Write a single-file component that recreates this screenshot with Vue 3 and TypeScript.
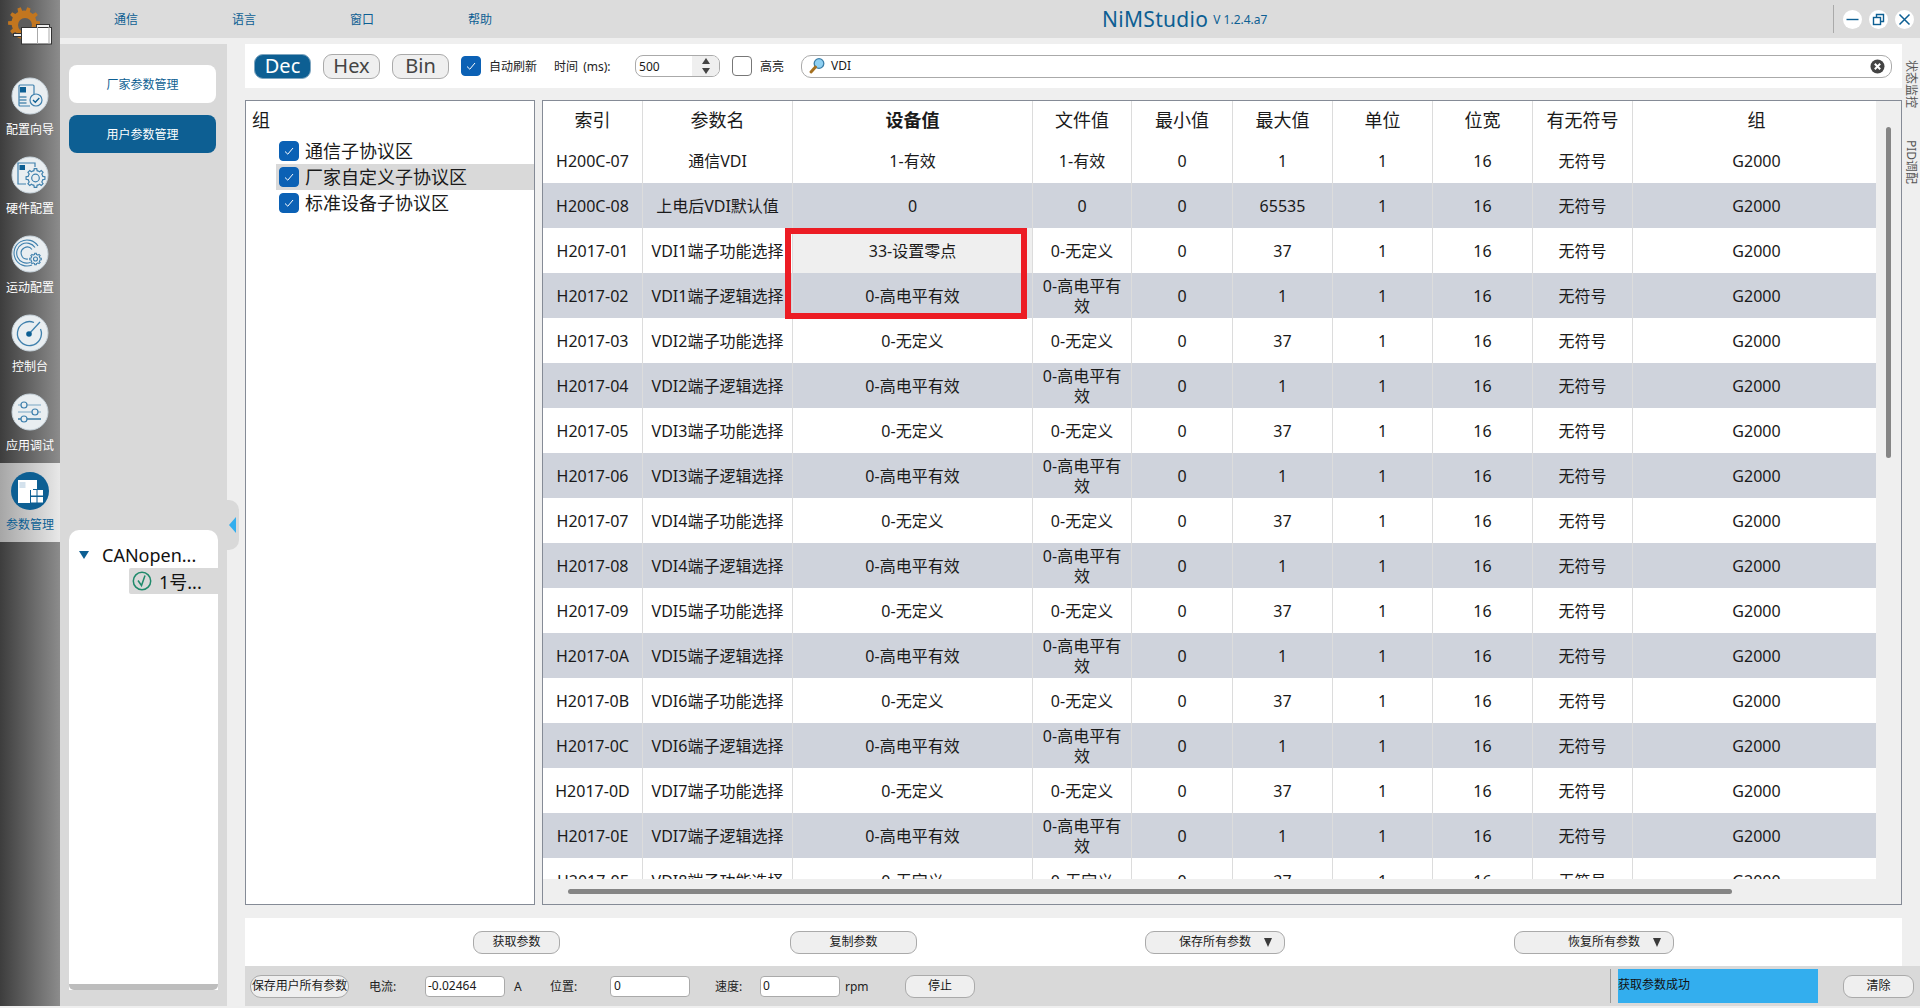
<script setup lang="ts">
function gear(cx: number, cy: number, ro: number, ri: number, teeth: number): string {
  const pts: string[] = []
  const step = (Math.PI * 2) / teeth
  for (let i = 0; i < teeth; i++) {
    const a = i * step
    const list: [number, number][] = [
      [ri, a - step * 0.5],
      [ri, a - step * 0.27],
      [ro, a - step * 0.17],
      [ro, a + step * 0.17],
      [ri, a + step * 0.27],
    ]
    for (const [r, t] of list) {
      pts.push(`${(cx + r * Math.cos(t)).toFixed(2)} ${(cy + r * Math.sin(t)).toFixed(2)}`)
    }
  }
  return 'M' + pts.join('L') + 'Z'
}

const logoGear = gear(24, 23, 16, 12.5, 10)
const icon2Gear = gear(24.5, 22, 9.5, 7.5, 8)
const icon3Gear = gear(24.5, 24, 5.8, 4.5, 8)

const menus = [
  { key: 'm1', name: '通信' },
  { key: 'm2', name: '语言' },
  { key: 'm3', name: '窗口' },
  { key: 'm4', name: '帮助' },
]
const navs = [
  { key: 'wizard', name: '配置向导' },
  { key: 'hardware', name: '硬件配置' },
  { key: 'motion', name: '运动配置' },
  { key: 'console', name: '控制台' },
  { key: 'tuning', name: '应用调试' },
  { key: 'params', name: '参数管理' },
]
const groups = [
  { name: '通信子协议区', active: false },
  { name: '厂家自定义子协议区', active: true },
  { name: '标准设备子协议区', active: false },
]
const heads = ['索引', '参数名', '设备值', '文件值', '最小值', '最大值', '单位', '位宽', '有无符号', '组']

type Row = { id: string; name: string; dev: string; file: string; min: string; max: string }
const rows: Row[] = [
  { id: 'H200C-07', name: '通信VDI', dev: '1-有效', file: '1-有效', min: '0', max: '1' },
  { id: 'H200C-08', name: '上电后VDI默认值', dev: '0', file: '0', min: '0', max: '65535' },
]
const suffix = ['01', '02', '03', '04', '05', '06', '07', '08', '09', '0A', '0B', '0C', '0D', '0E', '0F']
suffix.forEach((s, i) => {
  const n = Math.floor(i / 2) + 1
  const isFunc = i % 2 === 0
  rows.push({
    id: `H2017-${s}`,
    name: `VDI${n}端子${isFunc ? '功能' : '逻辑'}选择`,
    dev: i === 0 ? '33-设置零点' : isFunc ? '0-无定义' : '0-高电平有效',
    file: isFunc ? '0-无定义' : '0-高电平有效',
    min: '0',
    max: isFunc ? '37' : '1',
  })
})
</script>

<template>
  <div class="app">
    <aside class="rail">
      <div class="logo">
        <svg width="60" height="50" viewBox="0 0 60 50">
          <path :d="logoGear" fill="#c2761f" />
          <circle cx="25" cy="25" r="7" fill="#5c5c5c" />
          <rect x="13.500" y="33.500" width="9" height="3" fill="#eee" stroke="#333" />
          <rect x="36.500" y="24.500" width="13" height="3" fill="#eee" stroke="#333" />
          <rect x="21.500" y="27.500" width="30" height="16.500" fill="#fff" stroke="#333" />
          <path d="M37.500 27v17M49 27v17" stroke="#aaa" />
        </svg>
      </div>
      <div v-for="n in navs" :key="n.key" class="nav" :class="{ on: n.key === 'params' }">
        <svg class="nav-ic" width="38" height="38" viewBox="0 0 38 38">
          <template v-if="n.key === 'params'">
            <circle cx="19" cy="19" r="19" fill="#0d5f93" />
            <rect x="7" y="8" width="15" height="23" fill="#fff" />
            <rect x="22" y="8" width="4" height="9" fill="#fff" />
            <rect x="19" y="18" width="6" height="13" fill="#0d5f93" />
            <rect x="20" y="18" width="5.500" height="5.500" fill="#fff" />
            <rect x="26.500" y="18" width="5.500" height="5.500" fill="#fff" />
            <rect x="20" y="25" width="5.500" height="5.500" fill="#fff" />
            <rect x="26.500" y="25" width="5.500" height="5.500" fill="#fff" />
            <path d="M8.500 11h6M8.500 13h6M8.500 15h6" stroke="#a8c4da" stroke-width="1" />
          </template>
          <template v-else>
            <circle cx="19" cy="19" r="18" fill="#e9eef1" stroke="#c6d2da" />
            <g v-if="n.key === 'wizard'" fill="none" stroke="#3f80ad" stroke-width="1.200">
              <path d="M23 25V9a1 1 0 0 0-1-1H9a1 1 0 0 0-1 1v19a1 1 0 0 0 1 1h10" />
              <rect x="9" y="10" width="6" height="5.500" fill="#0d5f93" stroke="none" />
              <path d="M8.500 20h7M8.500 23h7M8.500 26h7" stroke="#0d5f93" />
              <circle cx="25" cy="23" r="6" fill="#e9eef1" />
              <path d="M22 23l2.300 2.300 4-4.300" stroke="#0d5f93" stroke-width="1.300" />
            </g>
            <g v-else-if="n.key === 'hardware'" fill="none" stroke="#3f80ad" stroke-width="1.200">
              <path d="M24 11V7H7v21h8" />
              <rect x="8.500" y="9" width="5.500" height="5" fill="#0d5f93" stroke="none" />
              <path :d="icon2Gear" fill="#e9eef1" />
              <circle cx="24.500" cy="22" r="3.800" />
            </g>
            <g v-else-if="n.key === 'motion'" fill="none" stroke="#3f80ad" stroke-width="1.100">
              <path d="M27 11a13 13 0 1 0-6 19" />
              <path d="M24 12.500a10 10 0 1 0-5 15" />
              <path d="M21 14.500a6 6 0 1 0-4 9.500" />
              <path :d="icon3Gear" fill="#e9eef1" />
              <circle cx="24.500" cy="24" r="2" />
            </g>
            <g v-else-if="n.key === 'console'" fill="none" stroke="#3f80ad" stroke-width="1.300">
              <path d="M23 8.500a12 12 0 1 0 6.500 6.500" />
              <path d="M17 21L29 8" stroke="#3f80ad" />
              <circle cx="18" cy="20" r="2.800" fill="#0d5f93" stroke="none" />
            </g>
            <g v-else fill="none" stroke="#3f80ad" stroke-width="1.200">
              <path d="M7 12h23M7 19h23" stroke="#7aa6c4" />
              <path d="M7 26h23" stroke="#0d5f93" />
              <circle cx="13" cy="12" r="3" fill="#e9eef1" />
              <circle cx="24" cy="19" r="3" fill="#e9eef1" />
              <circle cx="13" cy="26" r="3" fill="#e9eef1" />
            </g>
          </template>
        </svg>
        <span class="nav-t">{{ n.name }}</span>
      </div>
    </aside>

    <div class="main">
      <header class="top">
        <nav class="menus">
          <span v-for="m in menus" :key="m.key" class="menu">{{ m.name }}</span>
        </nav>
        <div class="brand">
          <span class="brand-n">NiMStudio</span>
          <span class="brand-v">V 1.2.4.a7</span>
        </div>
        <div class="win">
          <span class="win-btn">
            <svg width="19" height="19" viewBox="0 0 19 19"><path d="M3.500 9.500h12" stroke="#0d5f93" stroke-width="1.400" /></svg>
          </span>
          <span class="win-btn">
            <svg width="19" height="19" viewBox="0 0 19 19" fill="none" stroke="#0d5f93" stroke-width="1.400"><rect x="4.500" y="7.500" width="7" height="7" /><path d="M7.500 7V4.500h7v7H12" /></svg>
          </span>
          <span class="win-btn">
            <svg width="19" height="19" viewBox="0 0 19 19"><path d="M4.500 4.500l10 10M14.500 4.500l-10 10" stroke="#0d5f93" stroke-width="1.500" /></svg>
          </span>
        </div>
      </header>

      <div class="body">
        <section class="side">
          <div class="side-btn">厂家参数管理</div>
          <div class="side-btn dark">用户参数管理</div>
          <div class="handle"><i class="handle-arrow"></i></div>
          <div class="tree">
            <div class="tree-root"><i class="tree-caret"></i><span>CANopen...</span></div>
            <div class="tree-node">
              <svg width="20" height="20" viewBox="0 0 20 20" fill="none" stroke="#1f8a6b" stroke-width="1.500">
                <circle cx="10" cy="10" r="8.700" />
                <path d="M6 9.500l3.500 5 3.500-10" />
              </svg>
              <span>1号...</span>
            </div>
            <div class="tree-foot"></div>
          </div>
        </section>

        <div class="work">
          <div class="upper">
            <div class="content">
              <div class="tools">
                <button class="radix on">Dec</button>
                <button class="radix">Hex</button>
                <button class="radix">Bin</button>
                <span class="check on tool-check">
                  <svg width="12" height="12" viewBox="0 0 12 12"><path d="M2 6.500l2.800 2.700L10 3" fill="none" stroke="#fff" stroke-width="1" /></svg>
                </span>
                <span class="t12 auto">自动刷新</span>
                <span class="t12 time">时间 (ms):</span>
                <div class="spin">
                  <span class="spin-v">500</span>
                  <span class="spin-a"><i class="up"></i><i class="down"></i></span>
                </div>
                <span class="check hl-check"></span>
                <span class="t12 hl">高亮</span>
                <div class="search">
                  <svg width="18" height="18" viewBox="0 0 18 18">
                    <circle cx="11" cy="6.500" r="4.800" fill="#8fd0f2" stroke="#3a7ea8" stroke-width="1.300" />
                    <path d="M7.500 10L3 15" stroke="#a5701f" stroke-width="3" stroke-linecap="round" />
                  </svg>
                  <span class="search-v">VDI</span>
                  <svg class="search-x" width="15" height="15" viewBox="0 0 15 15">
                    <circle cx="7.500" cy="7.500" r="7" fill="#444" />
                    <path d="M4.800 4.800l5.400 5.400M10.200 4.800l-5.400 5.400" stroke="#fff" stroke-width="2" />
                  </svg>
                </div>
              </div>

              <div class="panes">
                <div class="groups">
                  <div class="groups-t">组</div>
                  <div v-for="g in groups" :key="g.name" class="group" :class="{ active: g.active }">
                    <span class="check on">
                      <svg width="12" height="12" viewBox="0 0 12 12"><path d="M2 6.500l2.800 2.700L10 3" fill="none" stroke="#fff" stroke-width="1" /></svg>
                    </span>
                    <span>{{ g.name }}</span>
                  </div>
                </div>

                <div class="grid-pane">
                  <div class="table-wrap">
                    <table class="tbl">
                      <colgroup>
                        <col class="c100" /><col class="c150" /><col class="c240" /><col class="c99" /><col class="c101" />
                        <col class="c100" /><col class="c100" /><col class="c100" /><col class="c100" /><col class="c243" />
                      </colgroup>
                      <thead>
                        <tr>
                          <th v-for="(h, i) in heads" :key="h" :class="{ strong: i === 2 }">{{ h }}</th>
                        </tr>
                      </thead>
                      <tbody>
                        <tr v-for="(r, i) in rows" :key="r.id" :class="{ alt: i % 2 === 1 }">
                          <td>{{ r.id }}</td>
                          <td class="tight">{{ r.name }}</td>
                          <td :class="{ picked: i === 2 }">{{ r.dev }}</td>
                          <td class="wrap">{{ r.file }}</td>
                          <td>{{ r.min }}</td>
                          <td>{{ r.max }}</td>
                          <td>1</td>
                          <td>16</td>
                          <td>无符号</td>
                          <td>G2000</td>
                        </tr>
                      </tbody>
                    </table>
                    <div class="mark"></div>
                  </div>
                  <div class="vtrack"><div class="vthumb"></div></div>
                  <div class="htrack"><div class="hthumb"></div></div>
                  <div class="corner"></div>
                </div>
              </div>

              <div class="actions">
                <button class="act a1">获取参数</button>
                <button class="act a2">复制参数</button>
                <button class="act a3 drop"><span>保存所有参数</span><i class="tri"></i></button>
                <button class="act a4 drop"><span>恢复所有参数</span><i class="tri"></i></button>
              </div>
            </div>
            <div class="tabs">
              <span class="tab">状态监控</span>
              <span class="tab">PID调配</span>
            </div>
          </div>

          <footer class="bar">
            <button class="act save">保存用户所有参数</button>
            <span class="t12 l1">电流:</span>
            <span class="field f1">-0.02464</span>
            <span class="t12 u1">A</span>
            <span class="t12 l2">位置:</span>
            <span class="field f2">0</span>
            <span class="t12 l3">速度:</span>
            <span class="field f3">0</span>
            <span class="t12 u3">rpm</span>
            <button class="act stop">停止</button>
            <span class="status">获取参数成功</span>
            <button class="act clear">清除</button>
          </footer>
        </div>
      </div>
    </div>
  </div>
</template>

<style>
html, body { margin: 0; padding: 0; background: #efefef; overflow: hidden; }
</style>

<style scoped>
* { box-sizing: border-box; }
.app {
  display: flex; width: 1920px; height: 1008px; padding-bottom: 2px; background: #efefef; overflow: hidden;
  font-family: "Noto Sans", "Noto Sans CJK SC", sans-serif; color: #1a1a1a; font-size: 12px;
}
button { font-family: inherit; padding: 0; cursor: default; color: #1a1a1a; }
.rail { width: 60px; flex: none; background: linear-gradient(90deg, #3d3d3d, #8c8c8c); }
.logo { height: 68px; }
.logo svg { overflow: visible; display: block; }
.nav { height: 79px; display: flex; flex-direction: column; align-items: center; padding-top: 9px; position: relative; }
.nav-ic { display: block; }
.nav-t { color: #fff; font-size: 12px; line-height: 16px; margin-top: 7px; white-space: nowrap; }
.nav.on { background: linear-gradient(90deg, #a6a6a6, #e8e8e8); }
.nav.on .nav-t { color: #0d5f93; }

.main { flex: 1; min-width: 0; display: flex; flex-direction: column; }
.top { height: 38px; flex: none; background: #dcdcdc; display: flex; align-items: center; position: relative; }
.menus { display: flex; padding-left: 54px; }
.menu { width: 118px; color: #0d5f93; font-size: 12px; }
.brand { position: absolute; left: 1042px; top: 0; height: 38px; display: flex; align-items: center; white-space: nowrap; }
.brand-n { font-size: 21px; color: #0d5f93; letter-spacing: 0.300px; }
.brand-v { font-size: 12px; color: #0d5f93; margin-left: 5px; padding-top: 1px; }
.win { position: absolute; left: 1773px; top: 5px; height: 28px; padding-left: 9px; border-left: 1px solid #aaa; display: flex; align-items: center; gap: 7px; }
.win-btn { width: 19px; height: 19px; border-radius: 50%; background: #fff; display: block; }
.win-btn svg { display: block; }

.body { flex: 1; min-height: 0; display: flex; padding-top: 6px; }
.side { width: 167px; flex: none; background: #d9d9d9; padding: 21px 0 0 9px; position: relative; display: flex; flex-direction: column; }
.side-btn { width: 147px; height: 38px; background: #fff; border-radius: 8px; color: #0d5f93; font-size: 12px; display: flex; align-items: center; justify-content: center; margin-bottom: 12px; }
.side-btn.dark { background: #0d5f93; color: #fff; }
.handle { position: absolute; left: 167px; top: 456px; width: 12px; height: 50px; background: #d9d9d9; border-radius: 0 10px 10px 0; display: flex; align-items: center; padding-left: 2px; }
.handle-arrow { width: 0; height: 0; border-style: solid; border-width: 8px 7px 8px 0; border-color: transparent #33aeee transparent transparent; }
.tree { width: 149px; height: 460px; margin-top: 365px; background: #fff; border-radius: 10px 10px 0 0; position: relative; padding-top: 12px; display: flex; flex-direction: column; }
.tree-root { height: 26px; display: flex; align-items: center; font-size: 18px; color: #111; padding-left: 10px; }
.tree-caret { width: 0; height: 0; border-style: solid; border-width: 8px 5px 0 5px; border-color: #0d5f93 transparent transparent transparent; margin-right: 13px; }
.tree-node { height: 26px; margin-left: 60px; background: #d9d9d9; border-radius: 2px 0 0 2px; display: flex; align-items: center; padding-left: 3px; font-size: 18px; color: #111; gap: 7px; }
.tree-node svg { flex: none; }
.tree-foot { height: 6px; margin-top: auto; background: #bdbdbd; border-radius: 0 0 5px 5px; }

.work { flex: 1; min-width: 0; display: flex; flex-direction: column; padding-left: 18px; }
.upper { flex: 1; min-height: 0; display: flex; }
.content { width: 1657px; flex: none; display: flex; flex-direction: column; }
.tabs { flex: 1; display: flex; flex-direction: column; align-items: center; padding-top: 16px; gap: 32px; }
.tab { writing-mode: vertical-rl; text-orientation: sideways; font-size: 12px; color: #555; line-height: 18px; }

.tools { height: 44px; flex: none; background: #fff; display: flex; align-items: center; padding-left: 9px; }
.radix { width: 57px; height: 25px; border-radius: 9px; border: 1px solid #aaa; background: #efefef; font-size: 20px; line-height: 20px; color: #444; margin-right: 12px; }
.radix.on { background: #0d5f93; color: #fff; border-color: #7fa6c0; }
.check { width: 20px; height: 20px; border-radius: 4px; border: 1px solid #777; background: #fff; display: flex; align-items: center; justify-content: center; flex: none; }
.check.on { background: #0b61b5; border-color: #0b61b5; }
.tool-check { margin-left: 0; }
.t12 { font-size: 12px; white-space: nowrap; color: #222; }
.auto { margin-left: 8px; }
.time { margin-left: 17px; width: 81px; word-spacing: 2px; }
.spin { width: 85px; height: 22px; border: 1px solid #aaa; border-radius: 8px; display: flex; align-items: center; background: #fff; padding-left: 3px; overflow: hidden; margin-right: 12px; }
.spin-v { flex: 1; font-size: 12px; }
.spin-a { width: 27px; height: 100%; background: #efefef; display: flex; flex-direction: column; align-items: center; justify-content: center; gap: 4px; }
.up, .down { width: 0; height: 0; border-style: solid; border-color: transparent; }
.up { border-width: 0 4px 6px 4px; border-bottom-color: #444; }
.down { border-width: 6px 4px 0 4px; border-top-color: #444; }
.hl { margin-left: 8px; width: 41px; }
.search { width: 1091px; height: 23px; border: 1px solid #aaa; border-radius: 10px; display: flex; align-items: center; padding-left: 6px; background: #fff; }
.search-v { font-size: 12px; margin-left: 5px; flex: 1; padding-bottom: 2px; }
.search-x { margin-right: 6px; }

.panes { flex: none; height: 805px; margin-top: 12px; display: flex; gap: 7px; }
.groups { width: 290px; height: 100%; background: #fff; border: 1px solid #858b96; padding: 7px 0 0 0; }
.groups-t { font-size: 18px; line-height: 24px; padding-left: 6px; margin-bottom: 6px; }
.group { height: 26px; margin-left: 30px; padding-left: 3px; display: flex; align-items: center; gap: 6px; font-size: 18px; }
.group span:last-child { margin-bottom: 2px; }
.group.active { background: #d9d9d9; }
.grid-pane { width: 1360px; height: 100%; border: 1px solid #858b96; background: #efefef; display: grid; grid-template-columns: 1333px 1fr; grid-template-rows: 778px 1fr; }
.table-wrap { position: relative; overflow: hidden; background: #fff; }
.tbl { width: 1333px; table-layout: fixed; border-collapse: separate; border-spacing: 0; }
.c100 { width: 100px; } .c150 { width: 150px; } .c240 { width: 240px; } .c99 { width: 99px; } .c101 { width: 101px; } .c243 { width: 243px; }
th { height: 37px; font-size: 18px; font-weight: 400; text-align: center; padding: 0 0 2px; border-right: 1px solid #dcdcdc; color: #1a1a1a; background: #fff; }
th.strong { font-weight: 700; }
td { height: 45px; font-size: 16px; text-align: center; padding: 0; border-right: 1px solid #dcdcdc; line-height: 20px; color: #1a1a1a; white-space: nowrap; }
th:last-child, td:last-child { border-right: 0; padding-left: 4px; }
td.wrap { white-space: normal; padding: 0 8px; }
tr.alt td { background: #cfd3dc; }
td.picked { background: #efefef; }
.mark { position: absolute; left: 242px; top: 127px; width: 242px; height: 91px; border: 6px solid #ec1c24; }
.vtrack { padding: 26px 0 0 10px; }
.vthumb { width: 5px; height: 331px; background: #858585; border-radius: 3px; }
.htrack { padding: 10px 0 0 25px; }
.hthumb { width: 1164px; height: 5px; background: #858585; border-radius: 3px; }

.actions { flex: none; height: 48px; margin-top: 13px; background: #fff; display: grid; align-items: center; grid-template-columns: 228px 87px 230px 127px 228px 140px 229px 160px; }
.act { height: 23px; border: 1px solid #aaa; border-radius: 9px; background: #efefef; font-size: 12px; line-height: 1; white-space: nowrap; }
.a1 { grid-column: 2; } .a2 { grid-column: 4; } .a3 { grid-column: 6; } .a4 { grid-column: 8; }
.drop { display: flex; align-items: center; justify-content: flex-end; padding-right: 12px; gap: 13px; }
.tri { width: 0; height: 0; border-style: solid; border-width: 9px 4.500px 0 4.500px; border-color: #3a3a3a transparent transparent transparent; }

.bar { height: 40px; flex: none; background: #d9d9d9; display: flex; align-items: center; padding-left: 5px; }
.save { width: 99px; border-radius: 11px; font-size: 12px; letter-spacing: -0.100px; }
.field { height: 21px; width: 80px; border: 1px solid #aaa; border-radius: 4px; background: #fff; font-size: 12px; line-height: 18px; padding-left: 2px; }
.l1 { margin-left: 20px; width: 56px; }
.u1 { margin-left: 9px; width: 36px; }
.l2 { width: 60px; }
.f2 { padding-left: 3px; }
.l3 { margin-left: 25px; width: 45px; }
.u3 { margin-left: 5px; width: 60px; }
.stop { width: 70px; }
.status { margin-left: 635px; width: 208px; height: 34px; border-left: 1px solid #999; padding-left: 7px; background: linear-gradient(90deg, transparent 7px, #33aeee 7px); line-height: 32px; font-size: 12px; color: #111; flex: none; white-space: nowrap; }
.clear { margin-left: 25px; width: 71px; }
</style>
